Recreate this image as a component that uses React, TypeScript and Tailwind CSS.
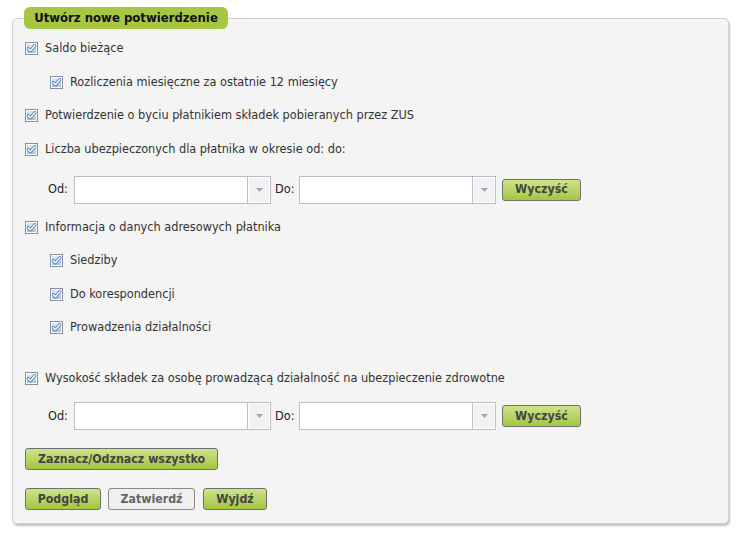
import React from 'react';

const font = { fontFamily: '"DejaVu Sans Condensed", "DejaVu Sans", Tahoma, sans-serif' };

function Check() {
  return (
    <svg width="13" height="13" viewBox="0 0 13 13" className="shrink-0">
      <defs>
        <linearGradient id="cbg" x1="0" y1="0" x2="0" y2="1">
          <stop offset="0" stopColor="#e2ebf7" />
          <stop offset="1" stopColor="#a9c1e0" />
        </linearGradient>
      </defs>
      <rect x="0.5" y="0.5" width="12" height="12" fill="#ffffff" stroke="#8593a8" />
      <rect x="2" y="2" width="9" height="9" fill="url(#cbg)" />
      <path d="M3.2 6.4 L5.4 8.8 L9.9 3.6" fill="none" stroke="#3f72b2" strokeWidth="3" strokeLinecap="round" strokeLinejoin="round" />
      <path d="M3.2 6.4 L5.4 8.8 L9.9 3.6" fill="none" stroke="#ffffff" strokeWidth="1.5" strokeLinecap="round" strokeLinejoin="round" />
    </svg>
  );
}

function Row({ label, sub }: { label: string; sub?: boolean }) {
  return (
    <label className={`flex items-center h-[33.5px] gap-[7px] ${sub ? 'pl-[37px]' : 'pl-[12px]'}`}>
      <Check />
      <span className="text-[12.6px] text-[#333]">{label}</span>
    </label>
  );
}

function Combo() {
  return (
    <div className="flex h-[28px] w-[197px] border border-[#b8bfcc] bg-white">
      <div className="flex-1" />
      <div className="w-[23px] border-l border-[#b8bfcc] bg-[#f2f2f2] flex items-center justify-center shadow-[inset_1px_1px_0_#fff,inset_-1px_-1px_0_#fff]">
        <svg width="7" height="4" viewBox="0 0 7 4">
          <path d="M0 0 H7 L3.5 4 Z" fill="#9aa7ba" />
        </svg>
      </div>
    </div>
  );
}

function GreenButton({ children, w }: { children: React.ReactNode; w: string }) {
  return (
    <button className={`${w} block h-[22px] rounded-[3px] border border-[#6f6f6f] bg-gradient-to-b from-[#cfe38c] to-[#a2c63e] text-[12.3px] font-bold text-[#444] leading-none`}>
      {children}
    </button>
  );
}

function DateRow({ mt }: { mt: string }) {
  return (
    <div className={`flex items-center pl-[35px] ${mt}`}>
      <span className="text-[12.6px] text-[#222] w-[26px]">Od:</span>
      <Combo />
      <span className="text-[12.6px] text-[#222] ml-[4px] w-[24px]">Do:</span>
      <Combo />
      <div className="ml-[6px]">
        <GreenButton w="w-[79px]">Wyczyść</GreenButton>
      </div>
    </div>
  );
}

export default function App() {
  return (
    <div className="w-[737px] h-[533px] bg-white pt-[18px] pl-[12px]" style={font}>
      <div className="relative w-[717px] h-[506px] rounded-[5px] border border-[#d2d2d2] bg-[#f4f4f4] shadow-[1px_2px_2px_rgba(0,0,0,0.25)] pt-[13px]">
        <div className="absolute -top-[12px] left-[11px] h-[22px] w-[204px] rounded-[6px] bg-[#a7c743] flex items-center justify-center text-[13px] font-bold text-[#111]">
          Utwórz nowe potwierdzenie
        </div>

        <Row label="Saldo bieżące" />
        <Row label="Rozliczenia miesięczne za ostatnie 12 miesięcy" sub />
        <Row label="Potwierdzenie o byciu płatnikiem składek pobieranych przez ZUS" />
        <Row label="Liczba ubezpieczonych dla płatnika w okresie od: do:" />
        <DateRow mt="mt-[9.5px]" />

        <div className="mt-[7px]">
          <Row label="Informacja o danych adresowych płatnika" />
          <Row label="Siedziby" sub />
          <Row label="Do korespondencji" sub />
          <Row label="Prowadzenia działalności" sub />
        </div>

        <div className="mt-[17px]">
          <Row label="Wysokość składek za osobę prowadzącą działalność na ubezpieczenie zdrowotne" />
        </div>
        <DateRow mt="mt-[7px]" />

        <div className="pl-[12px] mt-[18px]">
          <GreenButton w="w-[193px]">Zaznacz/Odznacz wszystko</GreenButton>
        </div>

        <div className="pl-[12px] mt-[18px] flex items-center">
          <GreenButton w="w-[76px]">Podgląd</GreenButton>
          <button className="block ml-[7px] w-[87px] h-[22px] rounded-[3px] border border-[#8a8a8a] bg-[#efefef] text-[12.3px] font-bold text-[#666] leading-none">
            Zatwierdź
          </button>
          <div className="ml-[8px]">
            <GreenButton w="w-[64px]">Wyjdź</GreenButton>
          </div>
        </div>
      </div>
    </div>
  );
}
